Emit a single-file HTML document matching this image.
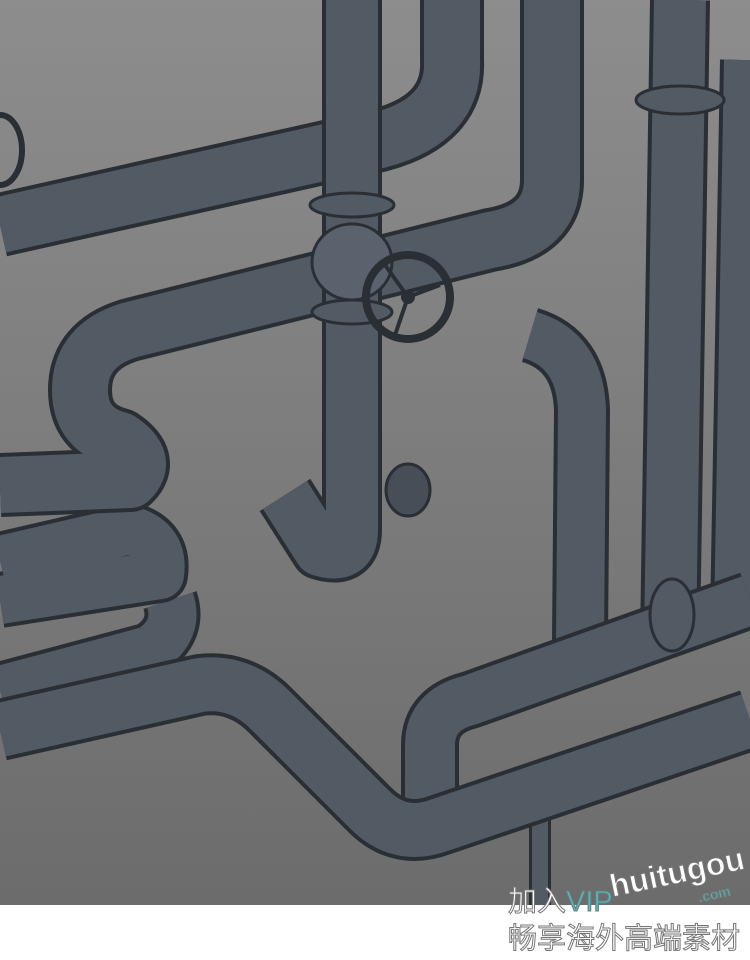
<!DOCTYPE html>
<html><head><meta charset="utf-8"><style>
html,body{margin:0;padding:0;background:#fff;width:750px;height:960px;overflow:hidden}
.wm{position:absolute;left:508px;font-family:"Liberation Sans","Noto Sans CJK SC",sans-serif;font-size:29px;color:#fff;-webkit-text-stroke:1px #777;white-space:nowrap}
.o{stroke:#2a2f36;fill:none;stroke-linejoin:round}
.b{stroke:#525a64;fill:none;stroke-linejoin:round}
</style></head><body>
<svg width="750" height="960" style="position:absolute;left:0;top:0">
<defs>
<linearGradient id="bg" x1="0" y1="0" x2="0" y2="1">
<stop offset="0" stop-color="#8d8d8d"/><stop offset="1" stop-color="#6c6c6c"/></linearGradient>
<path id="p1" d="M0 225 L380 140 Q455 120 452 60 L452 0"/>
<path id="p3" d="M552 0 L552 180 Q552 230 490 240 L130 330 Q80 345 80 390 Q80 430 120 440 Q150 460 130 480 L0 485"/>
<path id="p2" d="M352 0 L352 530 Q352 560 320 550 L285 495"/>
<path id="p4" d="M680 0 L670 640"/>
<path id="p5" d="M745 60 L735 620"/>
<path id="p6" d="M530 335 Q580 350 582 410 L580 640"/>
<path id="p7" d="M0 560 L130 530 Q165 540 160 575 L0 600"/>
<path id="p8" d="M0 690 L150 650 Q180 630 170 600"/>
<path id="p9" d="M0 730 L200 685 Q240 680 270 710 L370 810 Q400 840 440 825 L750 720"/>
<path id="p10" d="M430 800 L430 745 Q430 710 470 700 L750 600"/>
<path id="p11" d="M540 800 L540 905"/>
</defs>
<rect width="750" height="905" fill="url(#bg)"/>
<use href="#p11" class="o" stroke-width="22"/><use href="#p11" class="b" stroke-width="16"/>
<use href="#p5" class="o" stroke-width="50"/><use href="#p5" class="b" stroke-width="42"/>
<use href="#p4" class="o" stroke-width="60"/><use href="#p4" class="b" stroke-width="52"/>
<use href="#p6" class="o" stroke-width="56"/><use href="#p6" class="b" stroke-width="48"/>
<use href="#p8" class="o" stroke-width="56"/><use href="#p8" class="b" stroke-width="48"/>
<use href="#p7" class="o" stroke-width="56"/><use href="#p7" class="b" stroke-width="48"/>
<use href="#p10" class="o" stroke-width="58"/><use href="#p10" class="b" stroke-width="50"/>
<use href="#p9" class="o" stroke-width="62"/><use href="#p9" class="b" stroke-width="54"/>
<use href="#p1" class="o" stroke-width="64"/><use href="#p1" class="b" stroke-width="56"/>
<use href="#p3" class="o" stroke-width="64"/><use href="#p3" class="b" stroke-width="56"/>
<use href="#p2" class="o" stroke-width="60"/><use href="#p2" class="b" stroke-width="52"/>
<ellipse cx="352" cy="205" rx="42" ry="12" fill="#525a64" stroke="#2a2f36" stroke-width="3"/>
<ellipse cx="352" cy="312" rx="40" ry="12" fill="#525a64" stroke="#2a2f36" stroke-width="3"/>
<ellipse cx="352" cy="262" rx="40" ry="38" fill="#5a636d" stroke="#2a2f36" stroke-width="3"/>
<circle cx="408" cy="297" r="42" fill="none" stroke="#2a2f36" stroke-width="8"/>
<path d="M408 297 L385 265 M408 297 L440 285 M408 297 L395 335" stroke="#2a2f36" stroke-width="4"/>
<circle cx="408" cy="297" r="7" fill="#2a2f36"/>
<ellipse cx="408" cy="490" rx="22" ry="26" fill="#474e57" stroke="#2a2f36" stroke-width="3"/>
<ellipse cx="672" cy="615" rx="22" ry="36" fill="#525a64" stroke="#2a2f36" stroke-width="3"/>
<ellipse cx="680" cy="100" rx="44" ry="14" fill="#525a64" stroke="#2a2f36" stroke-width="3"/>
<ellipse cx="0" cy="150" rx="22" ry="35" fill="none" stroke="#2a2f36" stroke-width="6"/>
</svg>
<div class="wm" style="top:878px">加入<span style="color:#3cc3c3">VIP</span></div>
<div class="wm" style="top:868px;left:614px;font-weight:bold;font-size:32px;transform:rotate(-12deg);transform-origin:left bottom">huitugou</div>
<div class="wm" style="top:886px;left:698px;font-weight:bold;font-size:14px;color:#3cc3c3;transform:rotate(-12deg)">.com</div>
<div class="wm" style="top:915px">畅享海外高端素材</div>
</body></html>
